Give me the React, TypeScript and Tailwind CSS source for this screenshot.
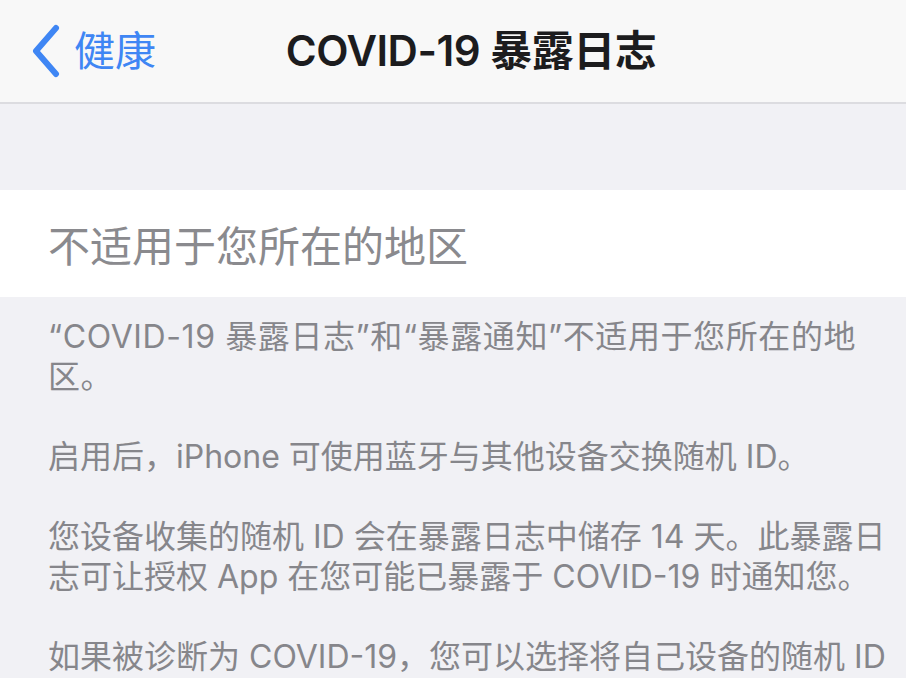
const font = "font-['Inter','Noto_Sans_CJK_SC',sans-serif]";

const paragraphs: string[][] = [
  ["“COVID-19 暴露日志”和“暴露通知”不适用于您所在的地", "区。"],
  ["启用后，iPhone 可使用蓝牙与其他设备交换随机 ID。"],
  ["您设备收集的随机 ID 会在暴露日志中储存 14 天。此暴露日", "志可让授权 App 在您可能已暴露于 COVID-19 时通知您。"],
  ["如果被诊断为 COVID-19，您可以选择将自己设备的随机 ID", "与授权 App 共享，以便其他人得到可能已暴露的通知。"],
];

function BackChevron() {
  return (
    <svg width="30" height="54" viewBox="0 0 30 54" fill="none">
      <path d="M25 4 L5 27 L25 50" stroke="#3f86f4" strokeWidth="6" strokeLinecap="round" strokeLinejoin="round" />
    </svg>
  );
}

export default function App() {
  return (
    <div className={`h-[678px] w-[906px] overflow-hidden bg-[#f1f1f5] ${font}`}>
      <header className="grid h-[104px] grid-cols-[1fr_auto_1fr] items-center border-b-2 border-[#dcdce0] bg-[#f8f8f8]">
        <div className="flex items-center gap-[13px] pl-[31px]">
          <BackChevron />
          <span className="text-[41px] leading-none text-[#3f86f4]">健康</span>
        </div>
        <h1 className="ml-[36px] text-[42px] font-semibold leading-none tracking-[-0.5px] text-[#1c1c1e]">
          COVID-19 暴露日志
        </h1>
        <div />
      </header>

      <div className="h-[86px]" />

      <div className="flex h-[107px] items-center bg-white pl-[48px] pt-[6px]">
        <span className="text-[42px] leading-none text-[#8a8a8e]">不适用于您所在的地区</span>
      </div>

      <div className="flex flex-col gap-[40px] pl-[48px] pt-[20px] text-[32px] leading-[40px] text-[#86868b]">
        {paragraphs.map((lines, i) => (
          <p key={i} className={`whitespace-nowrap ${i === 0 ? "tracking-[0.6px]" : ""}`}>
            {lines.map((line, j) => (
              <span key={j} className="block">
                {line}
              </span>
            ))}
          </p>
        ))}
      </div>
    </div>
  );
}
